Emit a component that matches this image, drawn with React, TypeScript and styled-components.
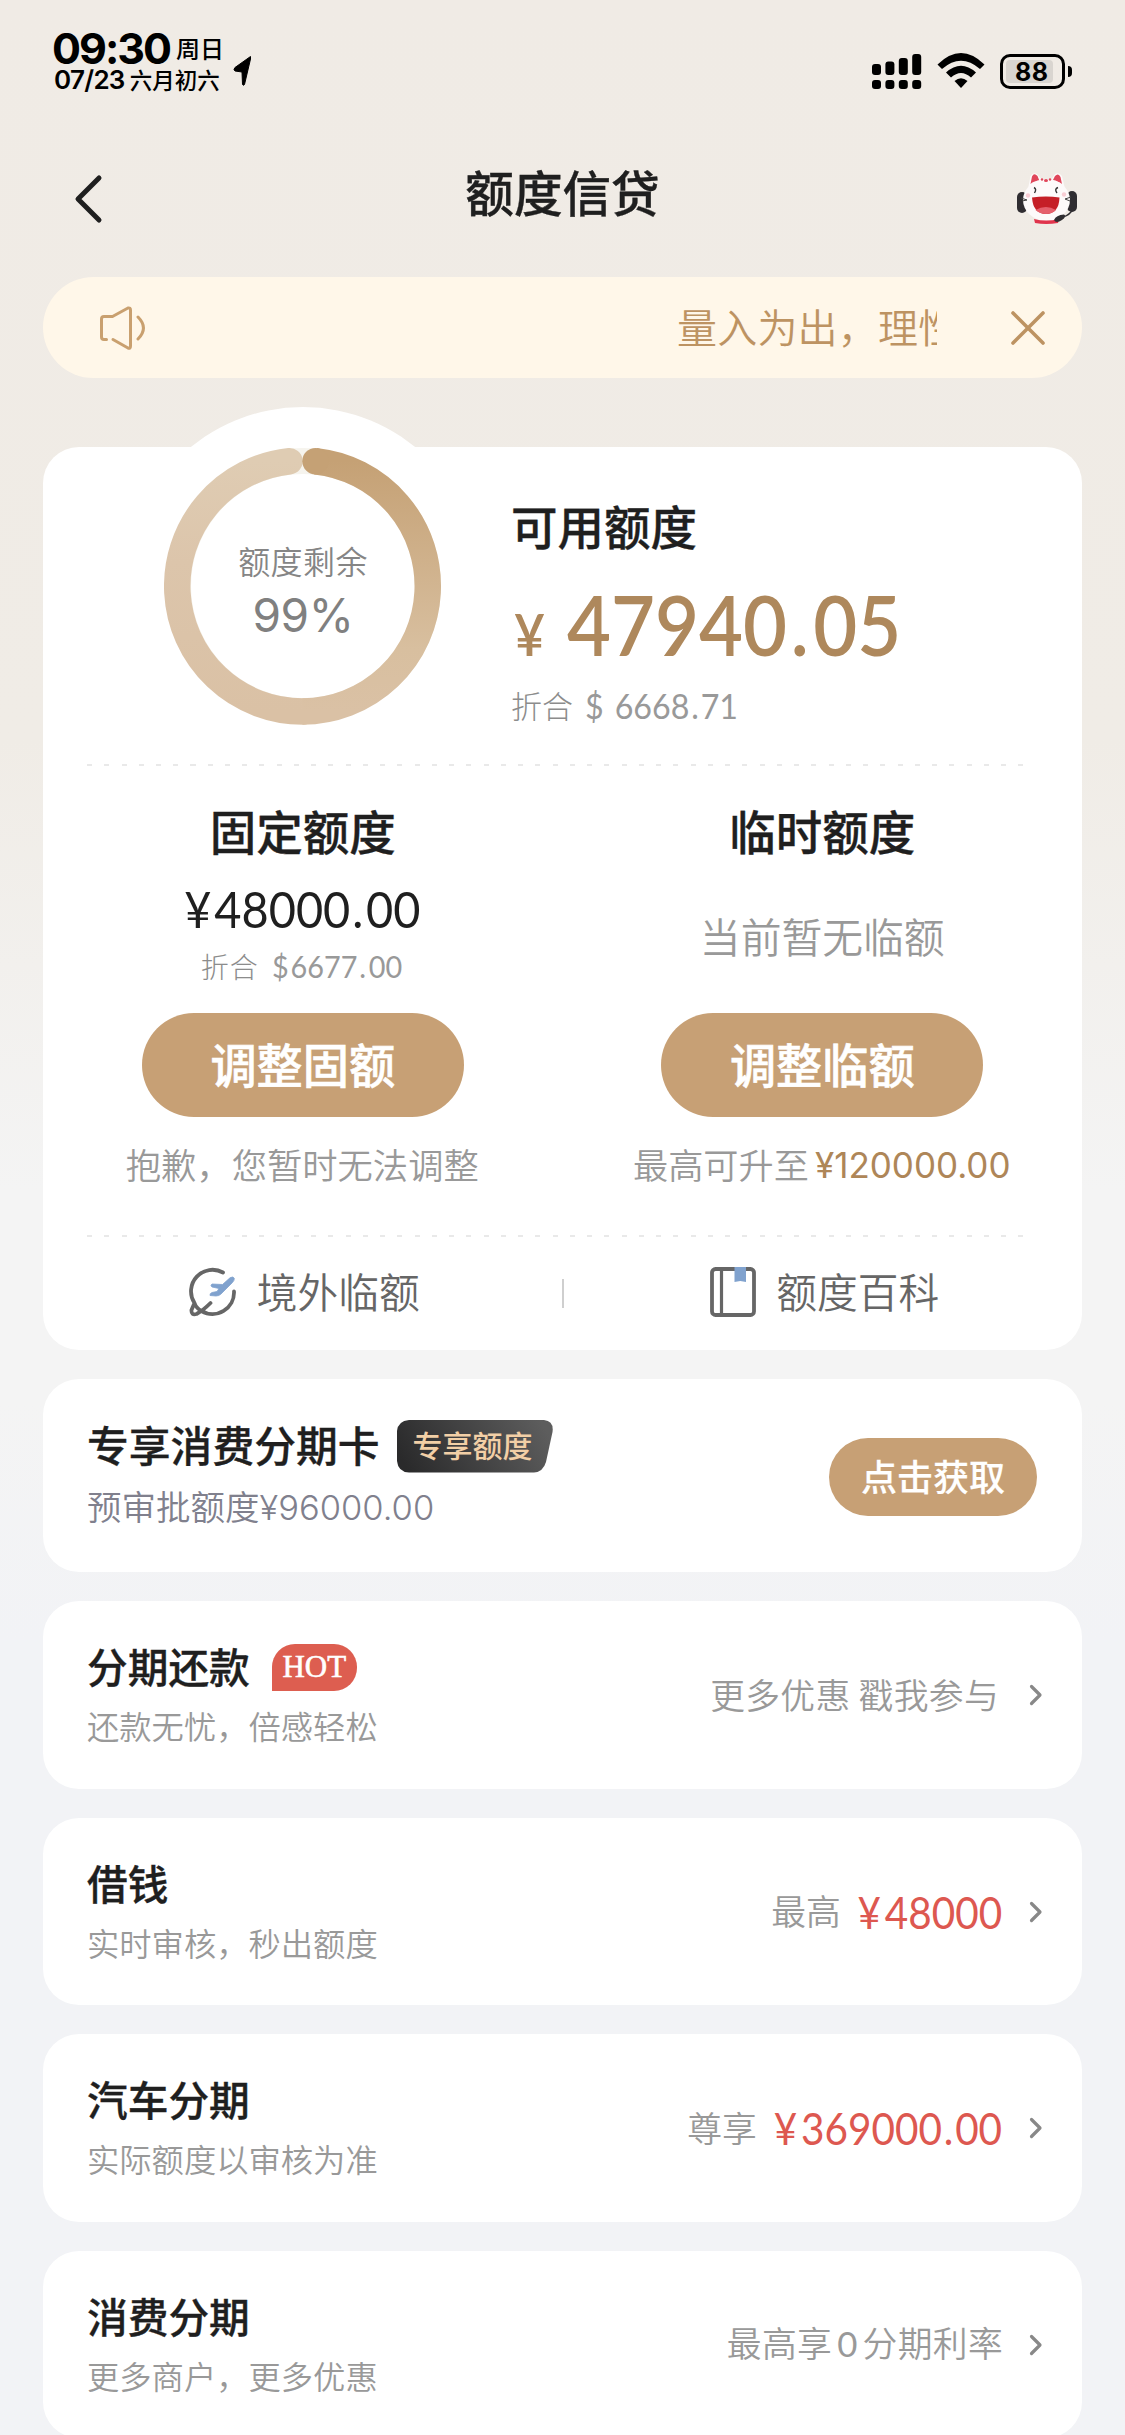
import React from "react";
import styled, { createGlobalStyle } from "styled-components";

const CJK = '"Noto Sans CJK SC", sans-serif';
const INTER = 'Inter, "Noto Sans CJK SC", sans-serif';
const LATO = 'Lato, "Noto Sans CJK SC", sans-serif';

const Global = createGlobalStyle`
  * { box-sizing: border-box; }
  body { margin: 0; background: #f2f3f6; font-family: ${CJK}; }
  svg { display: block; flex: none; }
`;

const Page = styled.main`
  width: 1125px;
  height: 2435px;
  overflow: hidden;
  padding: 0 43px;
  background: linear-gradient(180deg, #f0ebe5 0, #f0ece6 740px, #f4f4f4 1190px, #f4f4f4 1400px, #f2f3f6 1640px);
`;

interface TextProps {
  $size: number;
  $line?: number;
  $color?: string;
  $weight?: number;
  $track?: number;
  $font?: string;
  $stroke?: number;
}

const Text = styled.span<TextProps>`
  display: block;
  white-space: pre;
  font-family: ${(p) => p.$font ?? CJK};
  font-size: ${(p) => p.$size}px;
  line-height: ${(p) => p.$line ?? 40}px;
  color: ${(p) => p.$color ?? "#999"};
  font-weight: ${(p) => p.$weight ?? 350};
  letter-spacing: ${(p) => p.$track ?? 0}px;
  -webkit-text-stroke: ${(p) => p.$stroke ?? 0}px currentColor;
`;

const Heading = styled(Text).attrs({ $weight: 500, $color: "#1f1f1f", $stroke: 0.35 })``;

/* Condensed figures for money amounts */
const Figure = styled(Text)<{ $origin?: string; $scale?: number }>`
  font-family: ${LATO};
  transform: scaleX(${(p) => p.$scale ?? 0.92});
  transform-origin: ${(p) => p.$origin ?? "center"} center;
`;

const Pad = styled.span<{ $l?: number; $r?: number }>`
  padding: 0 ${(p) => p.$r ?? 0}px 0 ${(p) => p.$l ?? 0}px;
`;

/* ---------- status bar ---------- */

const StatusBar = styled.header`
  display: flex;
  justify-content: space-between;
  height: 118px;
  padding: 28px 10px 0 9px;
`;

const StatusLeft = styled.div`
  display: flex;
  align-items: flex-start;
  gap: 9px;
`;

const StatusLine = styled.div<{ $gap: number; $indent: number }>`
  display: flex;
  align-items: center;
  gap: ${(p) => p.$gap}px;
  padding-left: ${(p) => p.$indent}px;
`;

const LocationArrow = styled.svg`
  margin-top: 27px;
`;

const StatusRight = styled.div`
  display: flex;
  align-items: flex-start;
  padding-top: 24px;
`;

const SignalIcon = styled.svg`
  margin: 1px 15px 0 0;
`;

const WifiIcon = styled.svg`
  margin-right: 15px;
`;

const Battery = styled.div`
  display: grid;
  margin-top: 2px;
  width: 65px;
  height: 35px;
  padding: 3px 3px;
  border: 3px solid #000;
  border-radius: 10px;
`;

const BatteryLevel = styled.div`
  display: flex;
  align-items: center;
  width: 47px;
  height: 23px;
  border-radius: 4px;
  background: #d9d5d0;
  padding-left: 9px;
`;

const BatteryTip = styled.div`
  width: 4px;
  height: 11px;
  margin: 14px 0 0 3px;
  border-radius: 0 5px 5px 0;
  background: #000;
`;

/* ---------- navigation ---------- */

const NavBar = styled.nav`
  display: grid;
  grid-template-columns: 60px 1fr 60px;
  align-items: center;
  height: 159px;
  padding: 0 5px 9px 30px;
`;

const NavTitle = styled(Heading)`
  margin: 0 25px 4px 0;
  text-align: center;
`;

const BackIcon = styled.svg`
  margin-top: 12px;
`;

const MascotIcon = styled.svg`
  margin-top: 10px;
`;

/* ---------- notice ---------- */

const Notice = styled.section`
  display: flex;
  align-items: center;
  height: 101px;
  padding: 0 36px 0 56px;
  border-radius: 51px;
  background: #fff7e9;
`;

const Marquee = styled.div`
  flex: 1;
  margin: 0 73px 3px 30px;
  padding-left: 501px;
  overflow: hidden;
`;

/* ---------- cards ---------- */

const Card = styled.section`
  background: #fff;
  border-radius: 36px;
`;

const QuotaCard = styled(Card)`
  margin-top: 69px;
  height: 903px;
`;

const Overview = styled.div`
  display: flex;
  gap: 31px;
  height: 317px;
  padding-left: 83px;
`;

const Gauge = styled.div`
  display: grid;
  place-items: center;
  width: 354px;
  height: 354px;
  margin-top: -40px;
  padding-top: 3px;
  border-radius: 50%;
  background: #fff;

  & > * {
    grid-area: 1 / 1;
  }
`;

const GaugeLabel = styled.div`
  display: flex;
  flex-direction: column;
  align-items: center;
  gap: 10px;
  padding: 4px 0 0 0;
`;

const Available = styled.div`
  padding-top: 48px;
`;

const AmountRow = styled.div`
  display: flex;
  align-items: baseline;
  height: 80px;
  margin-top: 30px;
  padding-left: 3px;
`;

const SubRow = styled.div`
  display: flex;
  align-items: center;
  height: 40px;
  margin-top: 20px;
  gap: 12px;
`;

const Dashes = styled.div`
  width: 941px;
  height: 2px;
  margin-left: 44px;
  background: repeating-linear-gradient(90deg, #e9e9e9 0 5px, transparent 5px 17.25px);
`;

const QuotaSplit = styled.div`
  display: grid;
  grid-template-columns: 1fr 1fr;
  height: 469px;
`;

const QuotaColumn = styled.div`
  display: flex;
  flex-direction: column;
  align-items: center;
  padding-top: 34px;
`;

const QuotaBody = styled.div<{ $top: number }>`
  display: flex;
  flex-direction: column;
  align-items: center;
  height: 153px;
  padding-top: ${(p) => p.$top}px;
`;

const Converted = styled.div`
  display: flex;
  align-items: center;
  gap: 9px;
  height: 36px;
  margin: 19px 0 0 3px;
`;

const Pill = styled.button<{ $w: number; $h: number; $size: number; $stroke: number }>`
  display: flex;
  align-items: center;
  justify-content: center;
  flex: none;
  width: ${(p) => p.$w}px;
  height: ${(p) => p.$h}px;
  padding: 0 0 5px;
  border: 0;
  border-radius: ${(p) => p.$h / 2}px;
  background: #c7a075;
  color: #fff;
  font: 500 ${(p) => p.$size}px ${CJK};
  -webkit-text-stroke: ${(p) => p.$stroke}px currentColor;
`;

const Hint = styled.div`
  display: flex;
  align-items: center;
  gap: 6px;
  height: 40px;
  margin: 27px 1px 0 0;
`;

const HintAmount = styled(Text)`
  padding-top: 2px;
`;

const Links = styled.div`
  display: grid;
  grid-template-columns: 1fr 2px 1fr;
  align-items: center;
  height: 112px;
`;

const LinkItem = styled.a`
  display: flex;
  align-items: center;
  justify-content: center;
  gap: 20px;
  padding: 0 0 2px 4px;
`;

const LinkText = styled(Text)`
  margin-bottom: 2px;
`;

const LinkRule = styled.div`
  height: 29px;
  background: #cfcfcf;
`;

const OfferCard = styled(Card)`
  display: flex;
  justify-content: space-between;
  height: 193px;
  margin-top: 29px;
  padding: 33px 45px 0 44px;
`;

const OfferAction = styled.div`
  padding-top: 26px;
`;

const TitleRow = styled.div`
  display: flex;
  align-items: center;
  height: 64px;
`;

const OfferTag = styled.div`
  display: grid;
  align-items: center;
  width: 156px;
  height: 53px;
  margin: 5px 0 0 17px;

  & > * {
    grid-area: 1 / 1;
  }
`;

const TagText = styled(Text)`
  padding: 0 0 5px 16px;
`;

const OfferNote = styled(Text)`
  padding-top: 3px;
`;

const ProductCard = styled(Card)`
  display: flex;
  justify-content: space-between;
  height: 187.5px;
  margin-top: 29px;
  padding: 33px 39px 0 44px;
`;

const HotTag = styled.span`
  width: 85px;
  height: 47px;
  margin: 2px 0 0 22px;
  border-radius: 23px 23px 23px 0;
  background: #dd5e50;
  color: #fff;
  text-align: center;
  font: 400 31px/45px "Liberation Serif", serif;
  -webkit-text-stroke: 0.6px currentColor;
`;

const ProductSide = styled.div`
  display: flex;
  align-items: center;
  height: 122px;
`;

const SideText = styled(Text)<{ $end: number }>`
  padding-bottom: 3px;
  margin-right: ${(p) => p.$end}px;
`;

const Zero = styled.span`
  padding: 0 5px;
  font-family: ${LATO};
  font-weight: 400;
`;

const Chevron = styled.svg`
  margin-left: 27px;
`;

interface Product {
  title: string;
  note: string;
  side: React.ReactNode;
  end: number;
  amount?: [string, string];
  hot?: boolean;
}

const products: Product[] = [
  { title: "分期还款", note: "还款无忧，倍感轻松", side: "更多优惠 戳我参与", end: 3, hot: true },
  { title: "借钱", note: "实时审核，秒出额度", side: "最高", end: 0, amount: ["48000", ""] },
  { title: "汽车分期", note: "实际额度以审核为准", side: "尊享", end: -7, amount: ["369000", "00"] },
  { title: "消费分期", note: "更多商户，更多优惠", side: <>最高享<Zero>0</Zero>分期利率</>, end: -1 },
];

const Ring = () => (
  <svg width="278" height="278" viewBox="0 0 278 278" fill="none">
    <defs>
      <linearGradient id="ringRight" x1="0" y1="0" x2="0" y2="1">
        <stop offset="0" stopColor="#c5a175" />
        <stop offset="0.75" stopColor="#d8bf9f" />
        <stop offset="1" stopColor="#dac1a5" />
      </linearGradient>
      <linearGradient id="ringLeft" x1="0" y1="1" x2="0" y2="0">
        <stop offset="0" stopColor="#dac1a5" />
        <stop offset="0.6" stopColor="#dcc5ab" />
        <stop offset="1" stopColor="#dfccb3" />
      </linearGradient>
    </defs>
    <circle cx="139" cy="139" r="125" stroke="#f6f4ee" strokeWidth="26" />
    <path d="M139 264.500A125.500 125.500 0 0 1 125.5 14.200" stroke="url(#ringLeft)" strokeWidth="26.500" strokeLinecap="round" />
    <path d="M138.5 264.500A125.500 125.500 0 0 0 151.500 14.200" stroke="url(#ringRight)" strokeWidth="26.500" />
    <circle cx="151.500" cy="14.200" r="13.200" fill="#c5a175" />
  </svg>
);

const Mascot = () => (
  <MascotIcon width="60" height="52" viewBox="0 0 60 52">
    <rect x="0" y="20" width="10" height="21" rx="5" fill="#2f2d31" />
    <rect x="50" y="19" width="10" height="21" rx="5" fill="#2f2d31" />
    <path d="M11 17L13.500 4Q16 0 20 2L25 8H34L38 2Q42 0 45 4L48 17Z" fill="#fdfafa" />
    <path d="M13.500 12L15 4.500Q17 0.500 20.500 4L22.500 9Q16 9 13.500 12ZM35.500 9L38 4Q41.500 0.500 43.500 5L45 12Q41 9 35.500 9Z" fill="#e0465a" />
    <ellipse cx="29.500" cy="28" rx="23.500" ry="21" fill="#fdfafa" />
    <path d="M17 47Q29 50 42 47L41 51Q29 53 18 51Z" fill="#e0344c" />
    <path d="M15 25.500Q29 23.500 42.500 25.500Q42 41.500 29 42Q16 41.500 15 25.500Z" fill="#c51f27" />
    <path d="M18.500 38Q29 32 39 38Q35 42 29 42Q23 42 18.500 38Z" fill="#e5606c" />
    <path d="M17 15.500Q20 17 17.500 21M41 15.500Q37 17 40 21" stroke="#333" strokeWidth="1.400" fill="none" />
    <path d="M4 26L10 28L5 29M54 25L48 27L53 29" stroke="#444" strokeWidth="1" fill="none" />
    <circle cx="25" cy="7.500" r="1.200" fill="#e0465a" />
    <ellipse cx="29" cy="8.500" rx="2" ry="1.500" fill="#e0465a" />
    <circle cx="33" cy="7.500" r="1.200" fill="#e0465a" />
    <circle cx="11" cy="23.500" r="2.200" fill="#f8cdd4" />
    <circle cx="47" cy="22.500" r="2.200" fill="#f8cdd4" />
    <path d="M56 37Q53 43 46 45" stroke="#2f2d31" strokeWidth="1.600" fill="none" />
    <path d="M37 48Q39 43 47 42.500Q50 44 45 48Q39 52 37 48Z" fill="#2f2d31" />
  </MascotIcon>
);

const OverseasIcon = () => (
  <svg width="48" height="50" viewBox="0 0 48 50" fill="none">
    <path
      d="M34 5.500A21.500 21.500 0 0 0 5.500 36L2.500 43Q2 48.500 7.500 47Q14 43.500 21.500 36M5.500 36Q7 41 12.500 44A21.500 21.500 0 0 0 45 24.500"
      stroke="#666"
      strokeWidth="3.800"
      strokeLinecap="round"
      strokeLinejoin="round"
    />
    <path
      d="M23 17L33.500 17.500L41 10.800Q44 9 45.300 11.300Q45.500 13.500 43.500 15.500L32 27Q30 29 27 29L21 28.500Q20.500 26.500 23 25.500L28 24.500L30 21.500L23 20Q21 18.500 23 17Z"
      fill="#80a2ce"
      stroke="#80a2ce"
      strokeWidth="0.800"
    />
  </svg>
);

const BookIcon = () => (
  <svg width="46" height="50" viewBox="0 0 46 50" fill="none">
    <rect x="2" y="2" width="42" height="46" rx="3.500" stroke="#666" strokeWidth="3.800" />
    <path d="M11.500 2V48" stroke="#666" strokeWidth="3.200" />
    <path d="M24.500 0H36V15L30.300 14L24.500 15Z" fill="#80a2ce" />
  </svg>
);

export default function App() {
  return (
    <Page>
      <Global />
      <StatusBar>
        <StatusLeft>
          <div>
            <StatusLine $gap={6} $indent={0}>
              <Text $size={43} $line={40} $font={INTER} $weight={650} $color="#000" $track={-2}>09:30</Text>
              <Text $size={24} $line={40} $weight={500} $color="#000">周日</Text>
            </StatusLine>
            <StatusLine $gap={5} $indent={2}>
              <Text $size={26} $line={23} $font={INTER} $weight={600} $color="#000" $track={-0.7}>07/23</Text>
              <Text $size={22.5} $line={23} $weight={500} $color="#000">六月初六</Text>
            </StatusLine>
          </div>
          <LocationArrow width="19" height="32" viewBox="0 0 19 32">
            <path d="M17.500 1.500V4L11.500 29.500Q10.500 31 9.500 29.500L9 17L2 16Q0 14.500 2 12.500Z" fill="#000" stroke="#000" strokeLinejoin="round" />
          </LocationArrow>
        </StatusLeft>
        <StatusRight>
          <SignalIcon width="50" height="37" viewBox="0 0 50 37">
            {[11, 8.5, 5, 1].map((top, i) => (
              <g key={top}>
                <rect x={i * 13.4} y={top} width="9" height={22 - top} rx="3" />
                <rect x={i * 13.4} y="27" width="9" height="9" rx="3" />
              </g>
            ))}
          </SignalIcon>
          <WifiIcon width="48" height="37" viewBox="0 0 48 37">
            <path d="M0.500 12.500Q24 -10.500 47.500 12.500L43 17Q24 0.500 5 17Z" />
            <path d="M9 20.500Q24 7 39 20.500L34 25.500Q24 16.500 14 25.500Z" />
            <path d="M17.500 29Q24 23.500 30.500 29L24 36Z" />
          </WifiIcon>
          <Battery>
            <BatteryLevel>
              <Text $size={25} $line={22} $font={INTER} $weight={700} $color="#000" $track={0.5}>88</Text>
            </BatteryLevel>
          </Battery>
          <BatteryTip />
        </StatusRight>
      </StatusBar>

      <NavBar>
        <BackIcon width="30" height="50" viewBox="0 0 30 50" fill="none">
          <path d="M26 4L5 25L26 46" stroke="#1f1f1f" strokeWidth="5" strokeLinecap="round" strokeLinejoin="round" />
        </BackIcon>
        <NavTitle as="h1" $size={48.6} $line={60}>额度信贷</NavTitle>
        <Mascot />
      </NavBar>

      <Notice>
        <svg width="47" height="46" viewBox="0 0 47 46" fill="none" stroke="#c9a06f" strokeWidth="3" strokeLinecap="round" strokeLinejoin="round">
          <path d="M7.500 34.500H5Q2.500 34.500 2.500 32V14Q2.500 11.500 5 11.500H13.500L29 3Q31.500 2.500 31.500 5V41Q31.500 44 29 43L14 34.500" />
          <path d="M39 12Q50 23 39 34" />
        </svg>
        <Marquee>
          <Text $size={40} $line={60} $color="#bd9362" $track={0.2}>量入为出，理性消费</Text>
        </Marquee>
        <svg width="36" height="36" viewBox="0 0 36 36" fill="none" stroke="#bd9362" strokeWidth="3.600" strokeLinecap="round">
          <path d="M3 3L33 33M33 3L3 33" />
        </svg>
      </Notice>

      <QuotaCard>
        <Overview>
          <Gauge>
            <Ring />
            <GaugeLabel>
              <Text $size={32} $line={44} $color="#858585" $track={0.4}>额度剩余</Text>
              <Text $size={46} $line={46} $color="#808080" $font={INTER} $weight={380} $track={-0.4}>99%</Text>
            </GaugeLabel>
          </Gauge>
          <Available>
            <Heading $size={46.5} $line={60}>可用额度</Heading>
            <AmountRow>
              <Figure $size={58} $line={80} $weight={600} $color="#ae885c" $origin="left">¥</Figure>
              <Figure $size={82.5} $line={80} $weight={600} $color="#ae885c" $origin="left">
                {" 47940"}<Pad $l={4} $r={5}>.</Pad>05
              </Figure>
            </AmountRow>
            <SubRow>
              <Text $size={31} $line={40} $weight={300} $color="#8c8c8c">折合</Text>
              <Figure $size={35} $line={40} $weight={400} $origin="left"><Pad $r={3}>$</Pad> 6668<Pad $l={2} $r={2}>.</Pad>71</Figure>
            </SubRow>
          </Available>
        </Overview>
        <Dashes />
        <QuotaSplit>
          <QuotaColumn>
            <Heading $size={46.5} $line={60}>固定额度</Heading>
            <QuotaBody $top={29}>
              <Figure $size={51} $line={40} $weight={400} $color="#1f1f1f">
                <Pad $r={3}>¥</Pad>48000<Pad $l={2} $r={3}>.</Pad>00
              </Figure>
              <Converted>
                <Text $size={28} $line={34} $weight={300} $color="#8c8c8c" $track={0.8}>折合</Text>
                <Figure $size={31} $line={34} $weight={400} $scale={0.93}><Pad $r={2}>$</Pad>6677<Pad $l={2} $r={3}>.</Pad>00</Figure>
              </Converted>
            </QuotaBody>
            <Pill $w={322} $h={104} $size={46.2} $stroke={0.6}>调整固额</Pill>
            <Hint>
              <Text $size={35.3} $line={40}>抱歉，您暂时无法调整</Text>
            </Hint>
          </QuotaColumn>
          <QuotaColumn>
            <Heading $size={46.5} $line={60}>临时额度</Heading>
            <QuotaBody $top={56}>
              <Text $size={40.8} $line={40}>当前暂无临额</Text>
            </QuotaBody>
            <Pill $w={322} $h={104} $size={46.2} $stroke={0.6}>调整临额</Pill>
            <Hint>
              <Text $size={35.2} $line={40}>最高可升至</Text>
              <HintAmount $size={35} $line={40} $font={INTER} $weight={380} $color="#ae8658">¥120000.00</HintAmount>
            </Hint>
          </QuotaColumn>
        </QuotaSplit>
        <Dashes />
        <Links>
          <LinkItem>
            <OverseasIcon />
            <LinkText $size={40.7} $line={44} $color="#666">境外临额</LinkText>
          </LinkItem>
          <LinkRule />
          <LinkItem>
            <BookIcon />
            <LinkText $size={40.7} $line={44} $color="#666">额度百科</LinkText>
          </LinkItem>
        </Links>
      </QuotaCard>

      <OfferCard>
        <div>
          <TitleRow>
            <Heading $size={41.8} $line={60}>专享消费分期卡</Heading>
            <OfferTag>
              <svg width="156" height="53" viewBox="0 0 156 53">
                <defs>
                  <linearGradient id="tagFill" x1="0" y1="0.600" x2="1" y2="0.400">
                    <stop offset="0" stopColor="#2a2a2b" />
                    <stop offset="1" stopColor="#5d5d5d" />
                  </linearGradient>
                </defs>
                <path d="M12 0H147Q157 1 155.500 12L149 42Q146 52 137 52.500H12Q1 52 0 41V11Q1 1 12 0Z" fill="url(#tagFill)" />
              </svg>
              <TagText $size={30} $line={44} $weight={500} $color="#f2cfa6">专享额度</TagText>
            </OfferTag>
          </TitleRow>
          <OfferNote $size={34.5} $line={58} $color="#80808d" $font={INTER}>预审批额度¥96000.00</OfferNote>
        </div>
        <OfferAction>
          <Pill $w={208} $h={78} $size={36} $stroke={0.2}>点击获取</Pill>
        </OfferAction>
      </OfferCard>

      {products.map((p) => (
        <ProductCard key={p.title}>
          <div>
            <TitleRow>
              <Heading $size={40.7} $line={60}>{p.title}</Heading>
              {p.hot && <HotTag>HOT</HotTag>}
            </TitleRow>
            <Text $size={32.3} $line={55}>{p.note}</Text>
          </div>
          <ProductSide>
            <SideText $size={34.8} $line={40} $end={p.end} $track={p.amount ? 0 : 0.3}>{p.side}</SideText>
            {p.amount && (
              <Figure $size={44} $line={40} $weight={400} $color="#dd5850" $origin="right">
                <Pad $l={4} $r={4}>¥</Pad>{p.amount[0]}
                {p.amount[1] && <><Pad $l={2} $r={2}>.</Pad>{p.amount[1]}</>}
              </Figure>
            )}
            <Chevron width="14" height="22" viewBox="0 0 14 22" fill="none">
              <path d="M2.500 2.500L11 11L2.500 19.500" stroke="#888" strokeWidth="3.200" strokeLinecap="round" strokeLinejoin="round" />
            </Chevron>
          </ProductSide>
        </ProductCard>
      ))}
    </Page>
  );
}
